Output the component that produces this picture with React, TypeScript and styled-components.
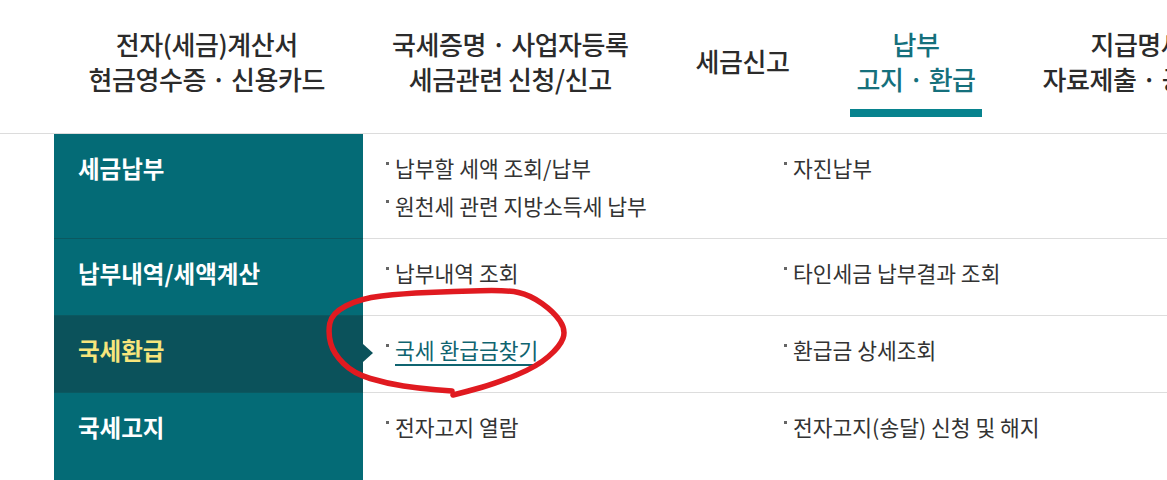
import React from "react";
import styled, { createGlobalStyle } from "styled-components";

const GlobalStyle = createGlobalStyle`
  html, body {
    margin: 0;
    padding: 0;
    background: #ffffff;
    overflow: hidden;
  }
  body {
    font-family: "Noto Sans CJK KR", "Noto Sans", sans-serif;
    color: #333333;
  }
  ul { margin: 0; padding: 0; list-style: none; }
`;

const Page = styled.div`
  position: relative;
  width: 1167px;
  height: 480px;
  overflow: hidden;
`;

const Header = styled.header`
  border-bottom: 1px solid #dcdcdc;
  height: 133px;
`;

const NavList = styled.ul`
  display: flex;
  flex-wrap: nowrap;
  margin-left: 55px;
  height: 100%;
`;

const NavItem = styled.li`
  flex-shrink: 0;
  display: flex;
  flex-direction: column;
  align-items: center;
  padding: 12px 33.5px 16px;
  box-sizing: border-box;
  height: 133px;
`;

const NavLabel = styled.div<{ $active?: boolean }>`
  flex: 1;
  display: flex;
  flex-direction: column;
  align-items: center;
  justify-content: center;
  font-size: 26px;
  font-weight: 500;
  letter-spacing: -0.45px;
  line-height: 35px;
  white-space: nowrap;
  color: ${(p) => (p.$active ? "#15707c" : "#2b2b2b")};
`;

const NavBar = styled.div<{ $active?: boolean }>`
  height: 8px;
  width: calc(100% + 12px);
  background: ${(p) => (p.$active ? "#07838e" : "transparent")};
`;

const Body = styled.div`
  margin-left: 54px;
  display: flex;
  flex-direction: column;
`;

const Row = styled.div`
  display: grid;
  grid-template-columns: 309px 1fr;
`;

const Side = styled.div<{ $active?: boolean; $last?: boolean }>`
  position: relative;
  box-sizing: border-box;
  padding: 15px 24px 0;
  background: ${(p) => (p.$active ? "#0b525b" : "#046b76")};
  border-bottom: 1px solid ${(p) => (p.$last ? "transparent" : "#0b5860")};
  font-size: 23.5px;
  font-weight: 700;
  letter-spacing: 0px;
  line-height: 38px;
  white-space: nowrap;
  color: ${(p) => (p.$active ? "#f7e57c" : "#ffffff")};

  ${(p) =>
    p.$active &&
    `
    &::after {
      content: "";
      position: absolute;
      left: 100%;
      top: 28px;
      width: 0;
      height: 0;
      border-top: 9px solid transparent;
      border-bottom: 9px solid transparent;
      border-left: 10px solid #0b525b;
    }
  `}
`;

const Content = styled.ul<{ $last?: boolean; $tall?: boolean }>`
  box-sizing: border-box;
  min-height: ${(p) => (p.$tall ? "110px" : "77px")};
  padding: 15px 0 13px 23px;
  border-bottom: 1px solid ${(p) => (p.$last ? "transparent" : "#dddddd")};
  display: grid;
  grid-template-columns: 398px 398px;
  align-content: start;
`;

const Item = styled.li`
  font-size: 21.5px;
  line-height: 38px;
  white-space: nowrap;
  color: #333333;
`;

const Bullet = styled.span`
  display: inline-block;
  width: 3px;
  height: 3px;
  background: #666666;
  margin-right: 6px;
  vertical-align: 0.55em;
`;

const ItemText = styled.span<{ $active?: boolean }>`
  color: ${(p) => (p.$active ? "#0f6470" : "#333333")};
  text-decoration: ${(p) => (p.$active ? "underline" : "none")};
  text-decoration-thickness: 2px;
  text-underline-offset: 5px;
  text-decoration-color: #0f6470;
`;

const Annotation = styled.svg`
  position: absolute;
  left: 0;
  top: 0;
  pointer-events: none;
`;

type NavDef = { lines: string[]; active?: boolean };

const navs: NavDef[] = [
  { lines: ["전자(세금)계산서", "현금영수증 · 신용카드"] },
  { lines: ["국세증명 · 사업자등록", "세금관련 신청/신고"] },
  { lines: ["세금신고"] },
  { lines: ["납부", "고지 · 환급"], active: true },
  { lines: ["지급명세서", "자료제출 · 공익법인"] },
];

type RowDef = {
  label: string;
  active?: boolean;
  items: { text: string; active?: boolean }[];
};

const rows: RowDef[] = [
  {
    label: "세금납부",
    items: [
      { text: "납부할 세액 조회/납부" },
      { text: "자진납부" },
      { text: "원천세 관련 지방소득세 납부" },
    ],
  },
  {
    label: "납부내역/세액계산",
    items: [{ text: "납부내역 조회" }, { text: "타인세금 납부결과 조회" }],
  },
  {
    label: "국세환급",
    active: true,
    items: [{ text: "국세 환급금찾기", active: true }, { text: "환급금 상세조회" }],
  },
  {
    label: "국세고지",
    items: [{ text: "전자고지 열람" }, { text: "전자고지(송달) 신청 및 해지" }],
  },
];

type Pt = [number, number];

const strokePts: Pt[] = [
  [453, 395],
  [467, 391.5],
  [497, 383],
  [537, 366.5],
  [560, 346.5],
  [566, 330],
  [554, 312],
  [530, 295],
  [507, 290],
  [453, 291.5],
  [403, 293.5],
  [360, 298.5],
  [331.5, 313.5],
  [328, 333.5],
  [333.5, 353.5],
  [353.5, 373.5],
  [387, 383.5],
  [420, 388.5],
  [452, 391],
];

function smoothPath(pts: Pt[]): string {
  let d = `M ${pts[0][0]} ${pts[0][1]}`;
  for (let i = 1; i < pts.length - 1; i++) {
    const [x, y] = pts[i];
    const [nx, ny] = pts[i + 1];
    const mx = (x + nx) / 2;
    const my = (y + ny) / 2;
    d += ` Q ${x} ${y} ${mx} ${my}`;
  }
  const last = pts[pts.length - 1];
  d += ` L ${last[0]} ${last[1]}`;
  return d;
}

export default function App() {
  return (
    <>
      <GlobalStyle />
      <Page>
        <Header>
          <NavList>
            {navs.map((n, i) => (
              <NavItem key={i}>
                <NavLabel $active={n.active}>
                  {n.lines.map((l) => (
                    <span key={l}>{l}</span>
                  ))}
                </NavLabel>
                <NavBar $active={n.active} />
              </NavItem>
            ))}
          </NavList>
        </Header>
        <Body>
          {rows.map((r, i) => {
            const last = i === rows.length - 1;
            return (
              <Row key={r.label}>
                <Side $active={r.active} $last={last}>
                  {r.label}
                </Side>
                <Content $last={last} $tall={last}>
                  {r.items.map((it) => (
                    <Item key={it.text}>
                      <Bullet />
                      <ItemText $active={it.active}>{it.text}</ItemText>
                    </Item>
                  ))}
                </Content>
              </Row>
            );
          })}
        </Body>
        <Annotation width={1167} height={480} viewBox="0 0 1167 480">
          <path
            d={smoothPath(strokePts)}
            fill="none"
            stroke="#e01a20"
            strokeWidth={5.5}
            strokeLinecap="round"
            strokeLinejoin="round"
          />
        </Annotation>
      </Page>
    </>
  );
}
